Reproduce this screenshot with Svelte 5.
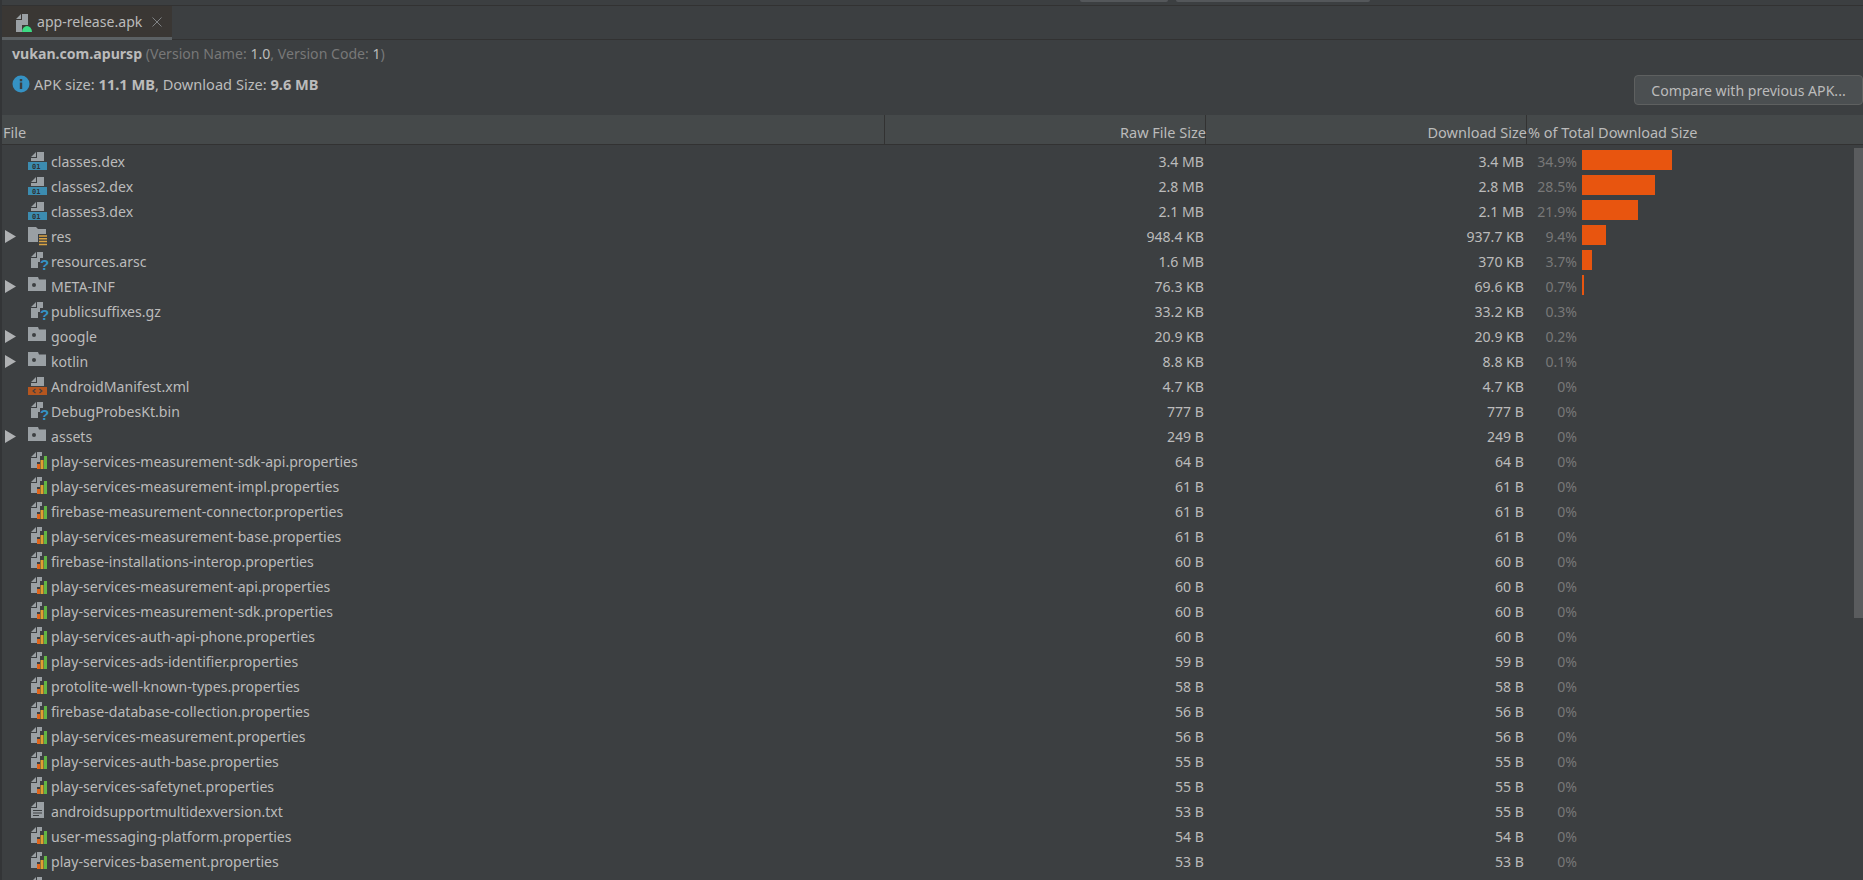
<script>
  const MAX_BAR = 90;
  const MAX_PCT = 34.9;

  const files = [
    { name: 'classes.dex', icon: 'dex', raw: '3.4 MB', dl: '3.4 MB', pct: '34.9%', v: 34.9 },
    { name: 'classes2.dex', icon: 'dex', raw: '2.8 MB', dl: '2.8 MB', pct: '28.5%', v: 28.5 },
    { name: 'classes3.dex', icon: 'dex', raw: '2.1 MB', dl: '2.1 MB', pct: '21.9%', v: 21.9 },
    { name: 'res', icon: 'res', dir: true, raw: '948.4 KB', dl: '937.7 KB', pct: '9.4%', v: 9.4 },
    { name: 'resources.arsc', icon: 'unknown', raw: '1.6 MB', dl: '370 KB', pct: '3.7%', v: 3.7 },
    { name: 'META-INF', icon: 'folder', dir: true, raw: '76.3 KB', dl: '69.6 KB', pct: '0.7%', v: 0.7 },
    { name: 'publicsuffixes.gz', icon: 'unknown', raw: '33.2 KB', dl: '33.2 KB', pct: '0.3%' },
    { name: 'google', icon: 'folder', dir: true, raw: '20.9 KB', dl: '20.9 KB', pct: '0.2%' },
    { name: 'kotlin', icon: 'folder', dir: true, raw: '8.8 KB', dl: '8.8 KB', pct: '0.1%' },
    { name: 'AndroidManifest.xml', icon: 'xml', raw: '4.7 KB', dl: '4.7 KB', pct: '0%' },
    { name: 'DebugProbesKt.bin', icon: 'unknown', raw: '777 B', dl: '777 B', pct: '0%' },
    { name: 'assets', icon: 'folder', dir: true, raw: '249 B', dl: '249 B', pct: '0%' },
    { name: 'play-services-measurement-sdk-api.properties', icon: 'props', raw: '64 B', dl: '64 B', pct: '0%' },
    { name: 'play-services-measurement-impl.properties', icon: 'props', raw: '61 B', dl: '61 B', pct: '0%' },
    { name: 'firebase-measurement-connector.properties', icon: 'props', raw: '61 B', dl: '61 B', pct: '0%' },
    { name: 'play-services-measurement-base.properties', icon: 'props', raw: '61 B', dl: '61 B', pct: '0%' },
    { name: 'firebase-installations-interop.properties', icon: 'props', raw: '60 B', dl: '60 B', pct: '0%' },
    { name: 'play-services-measurement-api.properties', icon: 'props', raw: '60 B', dl: '60 B', pct: '0%' },
    { name: 'play-services-measurement-sdk.properties', icon: 'props', raw: '60 B', dl: '60 B', pct: '0%' },
    { name: 'play-services-auth-api-phone.properties', icon: 'props', raw: '60 B', dl: '60 B', pct: '0%' },
    { name: 'play-services-ads-identifier.properties', icon: 'props', raw: '59 B', dl: '59 B', pct: '0%' },
    { name: 'protolite-well-known-types.properties', icon: 'props', raw: '58 B', dl: '58 B', pct: '0%' },
    { name: 'firebase-database-collection.properties', icon: 'props', raw: '56 B', dl: '56 B', pct: '0%' },
    { name: 'play-services-measurement.properties', icon: 'props', raw: '56 B', dl: '56 B', pct: '0%' },
    { name: 'play-services-auth-base.properties', icon: 'props', raw: '55 B', dl: '55 B', pct: '0%' },
    { name: 'play-services-safetynet.properties', icon: 'props', raw: '55 B', dl: '55 B', pct: '0%' },
    { name: 'androidsupportmultidexversion.txt', icon: 'txt', raw: '53 B', dl: '55 B', pct: '0%' },
    { name: 'user-messaging-platform.properties', icon: 'props', raw: '54 B', dl: '54 B', pct: '0%' },
    { name: 'play-services-basement.properties', icon: 'props', raw: '53 B', dl: '53 B', pct: '0%' }
  ];
</script>

{#snippet fileIcon(type)}
  <svg class="ficon" width="20" height="20" viewBox="0 0 20 20">
    {#if type === 'dex' || type === 'xml'}
      <path d="M3 7l5-5v5z M9 2h7v9H3V8h6z" fill="#9aa0a4" />
      {#if type === 'dex'}
        <rect x="0" y="12" width="19" height="8" fill="#3c8cb0" />
        <text x="4" y="19" class="bits">01</text>
      {:else}
        <rect x="0" y="12" width="19" height="8" fill="#b5561f" />
        <path d="M7.500 14l-2.500 2 2.500 2M11.500 14l2.500 2-2.500 2" fill="none" stroke="#3c3f41" stroke-width="1.100" />
      {/if}
    {:else if type === 'unknown'}
      <path d="M3 7l5-5v5z M9 2h6v6h-3v4h-2v6H3V8h6z" fill="#9aa0a4" />
      <text x="12" y="20" class="qm">?</text>
    {:else if type === 'props'}
      <path d="M3 7l5-5v5z M9 2h5v4h-2v6H9v6H3V8h6z" fill="#9aa0a4" />
      <rect x="9" y="14" width="3" height="5" fill="#e0651b" />
      <rect x="12.500" y="10" width="3" height="9" fill="#e0a030" />
      <rect x="16" y="6" width="3" height="13" fill="#62b543" />
    {:else if type === 'txt'}
      <path d="M3 7l5-5v5z M9 2h7v16H3V8h6z" fill="#9aa0a4" />
      <path d="M5 10.500h9M5 13h9M5 15.500h6" stroke="#3c3f41" stroke-width="1.100" />
    {:else if type === 'res'}
      <path d="M0 2h8l2 2h8v5h-8v8H0z" fill="#9aa0a4" />
      <path d="M11 11h8M11 13.800h8M11 16.600h8M11 19.400h8" stroke="#d9a343" stroke-width="1.500" />
    {:else}
      <path d="M0 2h10l1 2.500h7V16H0z" fill="#9aa0a4" />
      <circle cx="6" cy="10" r="2" fill="#3c3f41" />
    {/if}
  </svg>
{/snippet}

<div class="page">
  <div class="top-strip">
    <span class="stub one"></span>
    <span class="stub two"></span>
  </div>

  <div class="tabs">
    <div class="tab">
      <svg class="tab-icon" width="17" height="20" viewBox="0 0 17 20">
        <path d="M0 6l5-5v5z M6 1h6v11H6v7H0V7h6z" fill="#9aa0a4" />
        <path d="M6 19a5 6 0 0 1 10 0z" fill="#3ddc84" />
      </svg>
      <span>app-release.apk</span>
      <svg class="close" width="10" height="10" viewBox="0 0 10 10">
        <path d="M0.500 0.500l9 9M9.500 0.500l-9 9" stroke="#7f8284" stroke-width="1" />
      </svg>
    </div>
  </div>

  <div class="summary">
    <div class="app-line">
      <b>vukan.com.apursp</b>
      <span class="dim">(Version Name: <span class="val">1.0</span>, Version Code: <span class="val">1</span>)</span>
    </div>
    <div class="size-row">
      <div class="size-line">
        <svg width="18" height="18" viewBox="0 0 18 18">
          <circle cx="9" cy="9" r="8.500" fill="#3592c4" />
          <rect x="7.800" y="7.500" width="2.400" height="6.500" fill="#3c3f41" />
          <rect x="7.800" y="4" width="2.400" height="2.300" fill="#3c3f41" />
        </svg>
        <span>APK size: <b>11.1 MB</b>, Download Size: <b>9.6 MB</b></span>
      </div>
      <button class="compare">Compare with previous APK...</button>
    </div>
  </div>

  <div class="table">
    <div class="head">
      <div class="hcell sep">File</div>
      <div class="hcell right sep">Raw File Size</div>
      <div class="hcell right sep">Download Size</div>
      <div class="hcell">% of Total Download Size</div>
    </div>

    <div class="rows">
      {#each files as f}
        <div class="row">
          <div class="name">
            {#if f.dir}
              <svg class="arrow" width="11" height="13" viewBox="0 0 11 13"><path d="M0 0l11 6.500L0 13z" fill="#afb1b3" /></svg>
            {/if}
            {@render fileIcon(f.icon)}
            <span>{f.name}</span>
          </div>
          <div class="num">{f.raw}</div>
          <div class="num">{f.dl}</div>
          <div class="pct-cell">
            <span class="pct">{f.pct}</span>
            {#if f.v}
              <span class="bar" style="width: {Math.max(1, Math.round((f.v / MAX_PCT) * MAX_BAR))}px"></span>
            {/if}
          </div>
        </div>
      {/each}
      <div class="row">
        <div class="name">{@render fileIcon('props')}</div>
      </div>
    </div>

    <div class="scrollbar"></div>
  </div>
</div>

<style>
  :global(body) {
    background: #3c3f41;
    overflow: hidden;
  }

  .page {
    height: 880px;
    overflow: hidden;
    display: flex;
    flex-direction: column;
    background: #3c3f41;
    color: #bbbbbb;
    font-family: "Noto Sans", "Open Sans", sans-serif;
    font-size: 14.100px;
    border-left: 2px solid #333537;
    box-sizing: border-box;
  }

  .top-strip {
    height: 6px;
    flex: none;
    display: flex;
    align-items: flex-start;
    border-bottom: 1px solid #323232;
    box-sizing: border-box;
  }

  .stub {
    height: 2px;
    background: #54575a;
    border-radius: 0 0 2px 2px;
  }

  .stub.one {
    margin-left: 1078px;
    width: 88px;
  }

  .stub.two {
    margin-left: 8px;
    width: 194px;
  }

  .tabs {
    height: 34px;
    flex: none;
    border-bottom: 1px solid #323232;
    box-sizing: border-box;
    display: flex;
  }

  .tab {
    width: 170px;
    height: 34px;
    box-sizing: border-box;
    background: #3a3734;
    border-bottom: 3px solid #5c6164;
    display: flex;
    align-items: center;
    gap: 4px;
    padding-left: 14px;
  }

  .tab-icon {
    margin-top: 3px;
    overflow: visible;
  }

  .close {
    margin-left: 6px;
  }

  .summary {
    height: 75px;
    flex: none;
    padding: 3px 0 0 10px;
    box-sizing: border-box;
    display: flex;
    flex-direction: column;
  }

  .app-line {
    height: 22px;
    line-height: 22px;
    white-space: nowrap;
  }

  .dim {
    color: #787878;
  }

  .val {
    color: #bbbbbb;
  }

  .size-row {
    display: flex;
    justify-content: space-between;
    align-items: flex-start;
    margin-top: 9px;
  }

  .size-line {
    display: flex;
    align-items: center;
    gap: 4px;
    height: 20px;
    font-size: 14.600px;
  }

  .compare {
    width: 229px;
    height: 30px;
    margin-top: 1px;
    padding: 0;
    background: #4b4f51;
    border: 1px solid #5e6060;
    border-radius: 4px;
    color: #bbbbbb;
    font: inherit;
  }

  .table {
    position: relative;
    flex: 1;
    min-height: 0;
  }

  .head {
    display: grid;
    grid-template-columns: 883px 321px 321px 1fr;
    height: 30px;
    background: #45494a;
    box-shadow: inset 0 -1px 0 #323232;
    font-size: 14.500px;
  }

  .hcell {
    line-height: 35px;
    height: 29px;
    padding-left: 1px;
    white-space: nowrap;
  }

  .right {
    text-align: right;
    padding: 0;
  }

  .sep {
    box-shadow: inset -1px 0 0 #323232;
  }

  .rows {
    padding-top: 3px;
  }

  .row {
    display: grid;
    grid-template-columns: 883px 319px 320px 1fr;
    height: 25px;
    line-height: 28px;
  }

  .name {
    position: relative;
    display: flex;
    align-items: flex-start;
    padding-left: 26px;
    gap: 3px;
    white-space: nowrap;
  }

  .arrow {
    position: absolute;
    left: 3px;
    top: 7px;
  }

  .ficon {
    flex: none;
    margin-top: 2px;
    overflow: visible;
  }

  .bits {
    font-family: "DejaVu Sans Mono", monospace;
    font-size: 7px;
    font-weight: bold;
    fill: #2f3335;
  }

  .qm {
    font-family: "Liberation Sans", sans-serif;
    font-size: 15px;
    font-weight: bold;
    fill: #3592c4;
  }

  .num {
    text-align: right;
  }

  .pct-cell {
    display: flex;
    align-items: flex-start;
    padding-left: 3px;
  }

  .pct {
    width: 50px;
    text-align: right;
    color: #787878;
    flex: none;
  }

  .bar {
    height: 20px;
    margin-top: 2px;
    margin-left: 5px;
    background: #e8550f;
  }

  .scrollbar {
    position: absolute;
    top: 33px;
    right: 0;
    width: 9px;
    height: 470px;
    background: #5a5c5e;
  }
</style>
